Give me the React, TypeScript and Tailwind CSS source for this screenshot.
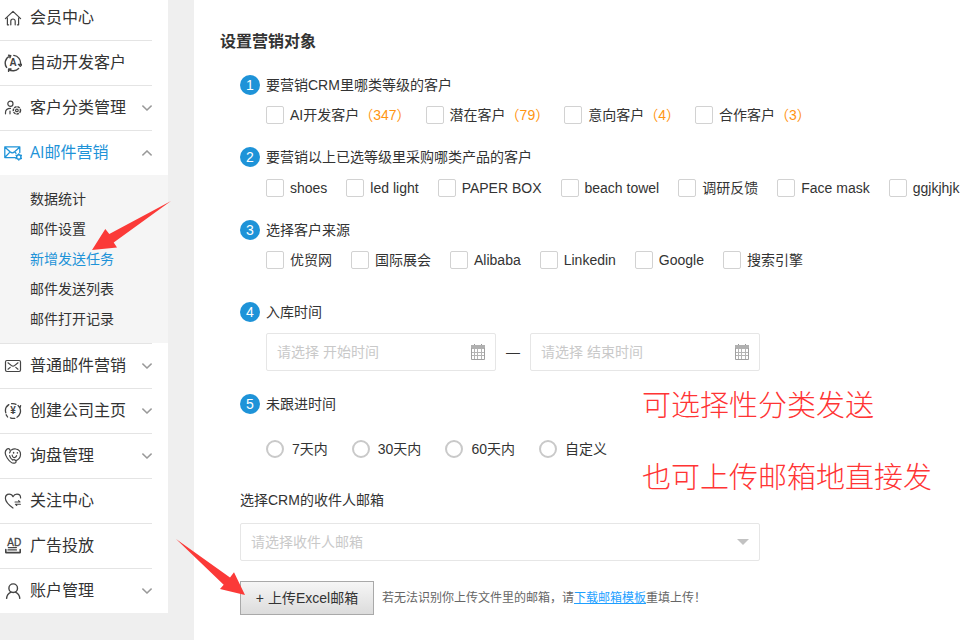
import React, { useState } from 'react';

type IconProps = { children: React.ReactNode };

const Icon: React.FC<IconProps> = ({ children }) => (
  <svg
    viewBox="0 0 18 18"
    className="w-[18px] h-[18px] shrink-0"
    fill="none"
    stroke="currentColor"
    strokeWidth="1.2"
    strokeLinecap="round"
    strokeLinejoin="round"
    aria-hidden="true"
  >
    {children}
  </svg>
);

const HomeIcon = () => (
  <Icon>
    <path d="M1.4 9.6 9 2.4l7.6 7.2M3.4 9v6.8h1.2M14.600 9v6.800h-1.200M6.800 15.800v-3.600a2.200 2.200 0 0 1 4.400 0v3.600" />
  </Icon>
);

const AutoIcon = () => (
  <Icon>
    <path d="M6.2 1.800A7.700 7.700 0 0 0 2.600 13.400M4.600 1.200l2.200.4-.8 2.200" strokeWidth="1.400" />
    <path d="M9.800 1.400a7.700 7.700 0 0 1 6.700 8.800M14.400 10.400h3.600l-1.700 2z" strokeWidth="1.300" />
    <path d="M14.600 14.400a7.700 7.700 0 0 1-10 1M4.600 17.400V15h2.400" strokeWidth="1.400" />
    <text x="9" y="12.4" textAnchor="middle" fontSize="10" fontWeight="700" fontFamily="Liberation Sans, sans-serif" fill="currentColor" stroke="none">A</text>
  </Icon>
);

const CustomerIcon = () => (
  <Icon>
    <circle cx="6.4" cy="4.8" r="2.6" />
    <path d="M1.500 14.800v-1.200c0-2.600 1.800-4.200 5-4.200M6 12.200v2.600" />
    <circle cx="12.9" cy="11.4" r="3.6" strokeWidth="1.500" strokeDasharray="2.600 .8" strokeLinecap="butt" />
    <circle cx="12.9" cy="11.4" r="1.3" />
  </Icon>
);

const AiMailIcon = () => (
  <Icon>
    <path d="M11.4 13.6H.8V2.800h15v5.800M1 3.200l5 4.600c1.600 1.400 3 1.400 4.600 0l5-4.600M1 13.200l4.400-4.600M11.200 8.400l.8.800" strokeWidth="1.300" />
    <circle cx="14.8" cy="12.900" r="2.200" strokeWidth="1.400" />
    <path d="M14.8 9.600v.6M14.8 15.600v.6M11.900 11.200l.5.3M17.200 14.300l.5.3M17.700 11.200l-.5.3M12.400 14.300l-.5.3" />
  </Icon>
);

const MailIcon = () => (
  <Icon>
    <rect x="1.5" y="3.500" width="15" height="11" rx="1.4" />
    <path d="M4 5.800l3.200 2.600c1.200 1 2.400 1 3.600 0L14 5.800M4 12.200l2.200-1.800M14 12.200l-2.200-1.800" />
  </Icon>
);

const YenIcon = () => (
  <Icon>
    <path d="M4.800 2.600a7.400 7.400 0 0 0-3 8.200M3.600 15l-1.400-2.200M7.600 1.700c1.600-.3 3.200 0 4.400.6M15.800 5.800a7.400 7.400 0 0 1-2.800 9.400M14 3.400l2 2.600.6-2.400M10.800 16.300c-1.600.3-3 .1-4.400-.5" strokeWidth="1.300" />
    <text x="9" y="12.4" textAnchor="middle" fontSize="10" fontWeight="700" fontFamily="Liberation Sans, sans-serif" fill="currentColor" stroke="none">¥</text>
  </Icon>
);

const InquiryIcon = () => (
  <Icon>
    <path d="M5.600 5.800c.8-1 .9-2.200.2-3.200-.8-1.100-2-1.200-3-.3C.6 4.400 1 7.800 3.200 11c2.400 3.600 5.600 5.800 7.800 5 1.200-.5 1.400-1.600.6-2.500-.9-1-2-1.100-3-.4-1.500-1-2.600-2.600-3-4.400" />
    <path d="M7.400 3c1.400-1 3-1.400 4.600-1 2.800.6 4.700 3 4.500 5.800-.2 2.600-1.600 4.600-3.900 5.600M8.200 8.200c.2 1.800 1.400 2.600 2.600 2.300 1-.3 1.600-1 1.800-1.800" />
    <path d="M9.600 5.600v.3M13.4 5.800v.3" strokeWidth="1.500" />
  </Icon>
);

const HeartIcon = () => (
  <Icon>
    <path d="M9 16C4.600 12.800 1.400 9.600 1.400 6.200c0-2.400 1.700-4 3.800-4 1.700 0 3.100.9 3.800 2.500.8-1.600 2.200-2.500 3.900-2.500 2.100 0 3.700 1.600 3.700 3.800" />
    <path d="M11 10h5l-1.400-1.300M16.400 12.200h-5l1.400 1.300" strokeWidth="1.1" />
  </Icon>
);

const AdIcon = () => (
  <Icon>
    <text x="10.2" y="8.600" textAnchor="middle" fontSize="10" fontFamily="Liberation Sans, sans-serif" fill="currentColor" stroke="currentColor" strokeWidth=".3">AD</text>
    <path d="M4.400 10.600h8M4 12.900h8.400" strokeWidth="1.300" />
    <path d="M1.800 12.600v3h14.400v-3" strokeWidth="1.600" />
  </Icon>
);

const UserIcon = () => (
  <Icon>
    <circle cx="9.2" cy="6.2" r="4.3" strokeWidth="1.4" />
    <path d="M2.600 16.400c.2-2.800 1.600-4.800 4.400-6.200M15.800 16.400c-.2-2.800-1.600-4.800-4.400-6.200" strokeWidth="1.4" />
  </Icon>
);

const Chevron: React.FC<{ up?: boolean }> = ({ up }) => (
  <svg viewBox="0 0 10 6" className="ml-auto w-[10px] h-[6px] shrink-0" fill="none" stroke="#999" strokeWidth="1.5" aria-hidden="true">
    <path d={up ? 'M.4 5.4 5 1l4.600 4.400' : 'M.4.6 5 5 9.600.6'} />
  </svg>
);

const CalendarIcon = () => (
  <svg viewBox="0 0 14 16" className="w-[14px] h-[16px] shrink-0" fill="none" stroke="#b4b4b4" aria-hidden="true">
    <path d="M3.500 0v3M10.500 0v3" stroke="#999" />
    <path d="M0 1h14v4H0z" fill="#b0b0b0" stroke="none" />
    <path d="M.5 4v11.500h13V4" stroke="#a0a0a0" />
    <path d="M3.500 5v10M6.500 5v10M10.500 5v10M1 8.500h12M1 11.500h12" />
  </svg>
);

const menuTop = [
  { text: '自动开发客户', icon: <AutoIcon /> },
  { text: '客户分类管理', icon: <CustomerIcon />, arrow: true },
];

const subMenu = ['数据统计', '邮件设置', '新增发送任务', '邮件发送列表', '邮件打开记录'];

const menuBottom = [
  { text: '普通邮件营销', icon: <MailIcon />, arrow: true },
  { text: '创建公司主页', icon: <YenIcon />, arrow: true },
  { text: '询盘管理', icon: <InquiryIcon />, arrow: true },
  { text: '关注中心', icon: <HeartIcon /> },
  { text: '广告投放', icon: <AdIcon /> },
  { text: '账户管理', icon: <UserIcon />, arrow: true },
];

const levels = [
  { text: 'AI开发客户', count: 347 },
  { text: '潜在客户', count: 79 },
  { text: '意向客户', count: 4 },
  { text: '合作客户', count: 3 },
];
const products = ['shoes', 'led light', 'PAPER BOX', 'beach towel', '调研反馈', 'Face mask', 'ggjkjhjk'];
const sources = ['优贸网', '国际展会', 'Alibaba', 'Linkedin', 'Google', '搜索引擎'];
const periods = ['7天内', '30天内', '60天内', '自定义'];

type MenuItemProps = {
  text: string;
  icon: React.ReactNode;
  arrow?: boolean;
  open?: boolean;
};

const MenuItem: React.FC<MenuItemProps> = ({ text, icon, arrow, open }) => (
  <a
    href="#"
    className={`mr-4 h-[45px] border-t border-[#e4e4e4] pl-1 flex items-center gap-2 ${open ? 'text-[#1e93d8]' : 'text-[#444]'}`}
  >
    {icon}
    <span className={open ? 'pb-[2px]' : 'pb-[2px] text-[#333]'}>{text}</span>
    {arrow && <Chevron up={open} />}
  </a>
);

const Sidebar = () => (
  <nav className="w-[168px] shrink-0 self-start bg-white text-base font-['Open_Sans','Noto_Sans_CJK_SC',sans-serif]">
    <a href="#" className="h-10 pb-1 pl-1 flex items-center gap-2 text-[#444]">
      <HomeIcon />
      <span className="pb-[2px] text-[#333]">会员中心</span>
    </a>
    {menuTop.map((item) => (
      <MenuItem key={item.text} {...item} />
    ))}
    <MenuItem text="AI邮件营销" icon={<AiMailIcon />} arrow open />
    <ul className="bg-[#f5f5f5] py-[9px] pl-[30px] text-sm">
      {subMenu.map((text) => (
        <li key={text} className="h-[30px] flex items-center">
          <a href="#" className={text === '新增发送任务' ? 'text-[#1e93d8]' : 'text-[#333]'}>
            {text}
          </a>
        </li>
      ))}
    </ul>
    {menuBottom.map((item) => (
      <MenuItem key={item.text} {...item} />
    ))}
  </nav>
);

const StepTitle: React.FC<{ num: number; children: React.ReactNode }> = ({ num, children }) => (
  <h3 className="flex items-center gap-[6px] h-5">
    <span className="w-5 h-5 rounded-full bg-[#1e93d8] text-white text-sm leading-5 text-center">
      {num}
    </span>
    {children}
  </h3>
);

const CheckBox: React.FC<{ children: React.ReactNode }> = ({ children }) => (
  <label className="flex items-center gap-[6px] h-[18px] whitespace-nowrap">
    <input
      type="checkbox"
      className="appearance-none w-[18px] h-[18px] rounded-xs border border-[#d2d2d2] bg-white checked:bg-[#1e93d8]"
    />
    <span>{children}</span>
  </label>
);

const DateField: React.FC<{ label: string }> = ({ label }) => (
  <label className="w-[230px] h-[38px] border border-[#e6e6e6] rounded-xs px-[10px] flex items-center">
    <input
      type="text"
      aria-label={label}
      placeholder={`请选择 ${label}`}
      className="flex-1 min-w-0 outline-none placeholder:text-[#c9c9c9]"
    />
    <CalendarIcon />
  </label>
);

export default function App() {
  const [period, setPeriod] = useState('');

  return (
    <div className="relative min-h-screen flex gap-[26px] bg-[#efefef] text-sm text-[#333] font-['Liberation_Sans','Noto_Sans_CJK_SC',sans-serif]">
      <Sidebar />

      <main className="flex-1 min-w-0 bg-white pt-[30px] pl-[26px] pb-6">
        <h2 className="text-base leading-6 font-bold">设置营销对象</h2>

        <form className="pl-5 pt-[21px]">
          <section className="mb-[23px]">
            <StepTitle num={1}>要营销CRM里哪类等级的客户</StepTitle>
            <div className="mt-[11px] pl-[26px] flex flex-wrap gap-[15px]">
              {levels.map((item) => (
                <CheckBox key={item.text}>
                  {item.text}
                  <span className="text-[#ff9512]">（{item.count}）</span>
                </CheckBox>
              ))}
            </div>
          </section>

          <section className="mb-[23px]">
            <StepTitle num={2}>要营销以上已选等级里采购哪类产品的客户</StepTitle>
            <div className="mt-3 pl-[26px] flex flex-wrap gap-[19px]">
              {products.map((text) => (
                <CheckBox key={text}>{text}</CheckBox>
              ))}
            </div>
          </section>

          <section className="mb-[33px]">
            <StepTitle num={3}>选择客户来源</StepTitle>
            <div className="mt-[11px] pl-[26px] flex flex-wrap gap-[19px]">
              {sources.map((text) => (
                <CheckBox key={text}>{text}</CheckBox>
              ))}
            </div>
          </section>

          <section className="mb-[23px]">
            <StepTitle num={4}>入库时间</StepTitle>
            <div className="mt-[11px] pl-[26px] flex items-center gap-[10px]">
              <DateField label="开始时间" />
              <span>—</span>
              <DateField label="结束时间" />
            </div>
          </section>

          <section className="mb-8">
            <StepTitle num={5}>未跟进时间</StepTitle>
            <div className="mt-[26px] pl-[26px] flex flex-wrap gap-6">
              {periods.map((text) => (
                <label key={text} className="flex items-center gap-2 h-[18px]">
                  <input
                    type="radio"
                    name="period"
                    checked={period === text}
                    onChange={() => setPeriod(text)}
                    className="appearance-none w-[18px] h-[18px] rounded-full border-2 border-[#c9c9c9] checked:bg-[#1e93d8]"
                  />
                  {text}
                </label>
              ))}
            </div>
          </section>

          <label htmlFor="receiver" className="block leading-5">
            选择CRM的收件人邮箱
          </label>
          <div className="mt-[13px] grid w-[520px] items-center">
            <select
              id="receiver"
              className="col-start-1 row-start-1 appearance-none h-[38px] border border-[#e6e6e6] rounded-xs bg-white px-[10px] text-[#c9c9c9] outline-none"
            >
              <option>请选择收件人邮箱</option>
            </select>
            <svg viewBox="0 0 12 6" className="col-start-1 row-start-1 justify-self-end mr-[11px] w-3 h-[6px] pointer-events-none" fill="#c2c2c2" aria-hidden="true">
              <path d="M0 0h12L6 6z" />
            </svg>
          </div>

          <div className="mt-5 flex items-center gap-2">
            <button
              type="button"
              className="w-[134px] h-[34px] border border-[#a9a9a9] bg-gradient-to-b from-[#f6f6f6] to-[#dcdcdc] whitespace-nowrap"
            >
              + 上传Excel邮箱
            </button>
            <p className="text-xs text-[#666]">
              若无法识别你上传文件里的邮箱，请
              <a href="#" className="text-[#1e9fff] underline">下载邮箱模板</a>
              重填上传！
            </p>
          </div>
        </form>
      </main>

      {/* Notes and arrows drawn over the page */}
      <div className="absolute left-[642px] top-[386px] text-[29px] leading-10 font-light text-[#ff3434] whitespace-nowrap pointer-events-none">
        <p>可选择性分类发送</p>
        <p className="mt-8">也可上传邮箱地直接发</p>
      </div>
      <svg viewBox="0 0 79 49" className="absolute left-[92px] top-[201px] w-[79px] h-[49px] pointer-events-none" fill="#fb3a38" aria-hidden="true">
        <path d="M79 0 17.3 33 13.3 28 0 49l25-2.5-3.3-5z" />
      </svg>
      <svg viewBox="0 0 69 56" className="absolute left-[176px] top-[539px] w-[69px] h-[56px] pointer-events-none" fill="#fb3a38" aria-hidden="true">
        <path d="M0 0 54 38.5 58 33.3 69 56 44 50l3.7-4.3z" />
      </svg>
    </div>
  );
}
